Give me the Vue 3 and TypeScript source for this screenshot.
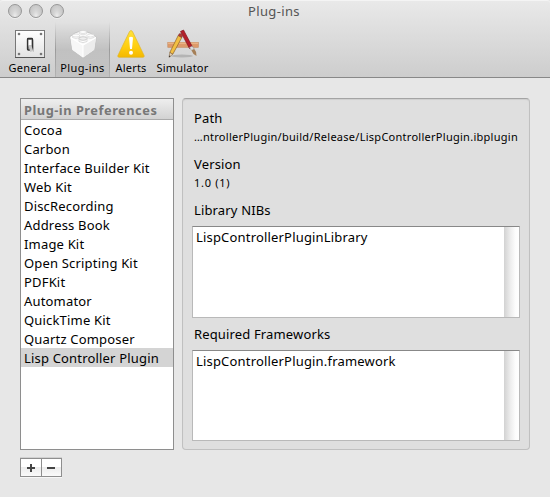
<script setup lang="ts">
import { ref } from 'vue'

const tools = ['General', 'Plug-ins', 'Alerts', 'Simulator']
const activeTool = ref('Plug-ins')

const plugins = [
  'Cocoa',
  'Carbon',
  'Interface Builder Kit',
  'Web Kit',
  'DiscRecording',
  'Address Book',
  'Image Kit',
  'Open Scripting Kit',
  'PDFKit',
  'Automator',
  'QuickTime Kit',
  'Quartz Composer',
  'Lisp Controller Plugin',
]
const selected = ref('Lisp Controller Plugin')
</script>

<template>
  <div class="window">
    <header class="chrome">
      <div class="titlebar">
        <div class="lights"><i></i><i></i><i></i></div>
        <span class="title">Plug-ins</span>
      </div>
      <nav class="toolbar">
        <button
          v-for="tool in tools"
          :key="tool"
          class="tool"
          :class="[tool.toLowerCase(), { active: tool === activeTool }]"
          @click="activeTool = tool"
        >
          <svg v-if="tool === 'General'" class="icon" viewBox="0 0 32 32">
            <defs>
              <linearGradient id="plate" x1="0" y1="0" x2="0" y2="1">
                <stop offset="0" stop-color="#fff" /><stop offset="1" stop-color="#e2e2e2" />
              </linearGradient>
            </defs>
            <rect x="1.5" y="2.5" width="29" height="27" fill="url(#plate)" stroke="#777" />
            <path d="M1 29.5h30" stroke="#555" />
            <g fill="#777">
              <circle cx="5" cy="6" r="1.3" /><circle cx="27" cy="6" r="1.3" />
              <circle cx="5" cy="26" r="1.3" /><circle cx="27" cy="26" r="1.3" />
            </g>
            <path d="M17 22l3 2-.5-12-2-1z" fill="#bbb" />
            <rect x="13.500" y="10.500" width="5" height="11.500" rx=".8" fill="#888" stroke="#333" stroke-width="1.300" />
            <rect x="14.500" y="12" width="3" height="5.500" fill="#fff" />
            <path d="M14.500 17.500h3l1.700 5.500-3 1z" fill="#c8c8c8" />
          </svg>
          <svg v-else-if="tool === 'Plug-ins'" class="icon" viewBox="0 0 32 32">
            <path d="M3 8.500 8 5l7-2.500 8 2.500 6.500 4-2 13L16 30 5 22z" fill="#fafafa" stroke="#bdbdbd" stroke-width=".8" />
            <path d="M3.400 9.500l12.600 7.500V29.600L5.300 21.800z" fill="#f7f7f7" />
            <path d="M29 10l-13 7V29.600l11.200-7.800z" fill="#ececec" />
            <path d="M3.500 9.500l12.500 7.500 13-7.500M16 17v12" fill="none" stroke="#fff" stroke-width="1.200" />
            <g fill="#fdfdfd" stroke="#d6d6d6" stroke-width=".7">
              <path d="M12.500 4v1.800q3.500 2 7 0V4" /><ellipse cx="16" cy="4" rx="3.500" ry="1.500" />
              <path d="M5.500 7.500v2q3.500 2 7 0v-2" /><ellipse cx="9" cy="7.500" rx="3.500" ry="1.500" />
              <path d="M20 7.500v2q3.500 2 7 0v-2" /><ellipse cx="23.500" cy="7.500" rx="3.500" ry="1.500" />
            </g>
            <path d="M12 10.500v3q4 2.200 8 0v-3" fill="#fff" stroke="#cfcfcf" stroke-width=".7" />
            <ellipse cx="16" cy="10.500" rx="4" ry="1.800" fill="#efefef" stroke="#bbb" stroke-width=".7" />
          </svg>
          <svg v-else-if="tool === 'Alerts'" class="icon" viewBox="0 0 32 32">
            <defs>
              <linearGradient id="warn" x1="0" y1="0" x2="0" y2="1">
                <stop offset="0" stop-color="#ffe23c" /><stop offset=".6" stop-color="#ffce10" />
                <stop offset="1" stop-color="#f4b800" />
              </linearGradient>
            </defs>
            <path d="M16 2.600q1 0 1.600 1.200L29 27.300q.8 2-1 2H4q-1.800 0-1-2L14.400 3.800Q15 2.600 16 2.600z" fill="url(#warn)" stroke="#dfb62d" stroke-width=".7" />
            <path d="M14 9.500q2-1.600 4 0l-1 11.500h-2z" fill="#fff" />
            <circle cx="16" cy="24.800" r="2" fill="#fff" />
          </svg>
          <svg v-else class="icon" viewBox="0 0 32 32">
            <ellipse cx="15" cy="28" rx="11" ry="1.500" fill="#999" opacity=".55" />
            <rect x=".8" y="14.300" width="30.500" height="5" fill="#dd9a6a" stroke="#c58a60" stroke-width=".6" />
            <path d="M1 15.200h30" stroke="#efbd92" />
            <path d="M13.500 3.500l3-1.500 9 17-3 1.500z" fill="#b5202b" stroke="#811820" stroke-width=".7" />
            <path d="M22.500 19.500l2.700-1.500 2 3-2.500 1.500z" fill="#ddd" stroke="#888" stroke-width=".5" />
            <path d="M24.500 22.500l2.800-1.600q2.500 2.600 2.200 7-3.600-1.400-5-5.400z" fill="#a68058" />
            <path d="M11.200 7.500l3.600 2L5.800 26.200 2.800 24.500z" fill="#f2bf43" stroke="#8f6324" stroke-width=".7" />
            <path d="M11.200 7.500l1-1.800q2-.8 3.700 1.800l-1.100 2z" fill="#b33a38" stroke="#70302c" stroke-width=".4" />
            <path d="M2.800 24.500l3 1.700L2 29.300z" fill="#e8d1ae" stroke="#735235" stroke-width=".5" />
            <path d="M2.300 27.500l1.300.7L2 29.300z" fill="#222" />
          </svg>
          <span class="tool-label">{{ tool }}</span>
        </button>
      </nav>
    </header>

    <main class="content">
      <section class="left">
        <div class="list">
          <div class="list-head"><span>Plug-in Preferences</span></div>
          <div
            v-for="name in plugins"
            :key="name"
            class="row"
            :class="{ selected: name === selected }"
            @click="selected = name"
          >{{ name }}</div>
        </div>
        <div class="buttons">
          <button aria-label="Add"><svg viewBox="0 0 20 17"><path d="M6 9h8M10 5v8" /></svg></button>
          <button aria-label="Remove"><svg viewBox="0 0 19 17"><path d="M5 9h8" /></svg></button>
        </div>
      </section>

      <section class="panel">
        <div class="label">Path</div>
        <div class="value path">…ntrollerPlugin/build/Release/LispControllerPlugin.ibplugin</div>
        <div class="label">Version</div>
        <div class="value version">1.0 (1)</div>
        <div class="label nibs">Library NIBs</div>
        <div class="box first"><span>LispControllerPluginLibrary</span><i class="track"></i></div>
        <div class="label frameworks">Required Frameworks</div>
        <div class="box"><span>LispControllerPlugin.framework</span><i class="track"></i></div>
      </section>
    </main>
  </div>
</template>

<style>
body { margin: 0; background: #e7e7e7; }
</style>

<style scoped>
* { box-sizing: border-box; }
.window {
  width: 550px;
  height: 497px;
  background: #e7e7e7;
  font-family: "Noto Sans", "Open Sans", sans-serif;
  font-size: 13px;
  color: #000;
  overflow: hidden;
  white-space: nowrap;
}
button { font: inherit; color: inherit; padding: 0; margin: 0; border: 0; background: none; }
.chrome {
  height: 78px;
  background: linear-gradient(#e9e9e9, #cdcdcd);
  border-top: 1px solid #f4f4f4;
  border-bottom: 1px solid #888;
  border-radius: 3px 3px 0 0;
}
.titlebar { height: 21px; display: grid; grid-template-columns: 100px 1fr 102px; }
.lights { display: flex; gap: 7px; padding: 3px 0 0 8px; }
.lights i {
  width: 14px;
  height: 14px;
  border-radius: 50%;
  border: 1px solid #979797;
  background: radial-gradient(ellipse at 50% 95%, #eee 0, #d6d6d6 35%, #bdbdbd 100%);
  box-shadow: 0 1px 0 #eee;
}
.title { text-align: center; line-height: 20px; color: #555; letter-spacing: .35px; }
.toolbar { display: flex; height: 55px; }
.tool { display: flex; flex-direction: column; align-items: center; padding-top: 6px; }
.general { width: 55px; padding-left: 4px; }
.plug-ins { width: 55px; }
.alerts { width: 42px; }
.simulator { width: 61px; }
.active {
  background: linear-gradient(rgba(0,0,0,0), rgba(0,0,0,.1) 50%, rgba(0,0,0,.05));
  border: 0 solid;
  border-width: 0 1px;
  border-image: linear-gradient(rgba(0,0,0,0), rgba(0,0,0,.2) 50%, rgba(0,0,0,.08)) 1;
}
.icon { width: 32px; height: 32px; display: block; flex: none; }
.tool-label { font-size: 11px; line-height: 15px; letter-spacing: .2px; }
.plug-ins .tool-label { letter-spacing: .35px; }
.content { display: flex; padding: 20px 20px 0; gap: 8px; }
.left { width: 154px; }
.list { height: 352px; border: 1px solid #8e8e8e; background: #fff; }
.list-head {
  height: 21px;
  line-height: 22px;
  padding-left: 3px;
  background: linear-gradient(#eee, #d2d2d2);
  border-bottom: 1px solid #aaa;
  color: #777;
  font-weight: bold;
  letter-spacing: .52px;
  font-size: 12.8px;
}
.row { height: 19px; line-height: 20px; padding-left: 3px; letter-spacing: .18px; }
.selected { background: #d4d4d4; }
.buttons { display: flex; margin-top: 8px; width: 42px; height: 19px; border: 1px solid #8e8e8e; box-shadow: 0 1px 0 #f7f7f7, 0 -1px 0 #d0d0d0; }
.buttons button { width: 20px; height: 17px; flex: none; background: linear-gradient(#fff 50%, #ededed 50%, #fafafa); }
.buttons button + button { border-left: 1px solid #8e8e8e; }
.buttons svg { width: 100%; height: 17px; display: block; }
.buttons path { stroke: #444; stroke-width: 2; }
.panel {
  width: 348px;
  height: 352px;
  background: #dfdfdf;
  border: 1px solid #c0c0c0;
  border-top-color: #a4a4a4;
  border-radius: 4px;
  box-shadow: inset 0 1px 1px #cfcfcf;
  padding: 9px 9px 0;
}
.label { height: 20px; line-height: 20px; padding-left: 2px; letter-spacing: .15px; }
.value { height: 26px; line-height: 17px; font-size: 11px; padding-left: 2px; }
.path { letter-spacing: .27px; }
.version { letter-spacing: .7px; }
.box {
  height: 91px;
  display: flex;
  justify-content: space-between;
  border: 1px solid #b9b9b9;
  border-top-color: #888;
  background: #fff;
}
.box span { padding-left: 3px; line-height: 20px; letter-spacing: .18px; }
.nibs { height: 26px; }
.first { height: 92px; }
.frameworks { height: 32px; padding-top: 6px; }
.track { width: 15px; background: linear-gradient(90deg, #d2d2d2, #eee 45%, #fcfcfc 75%, #fff); }
</style>
